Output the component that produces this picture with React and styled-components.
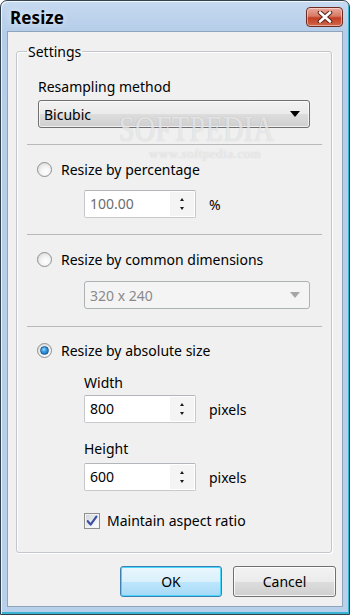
import React from 'react';
import styled, { createGlobalStyle } from 'styled-components';

const Global = createGlobalStyle`
  html, body { margin: 0; padding: 0; background: #ffffff; }
  body {
    width: 350px; height: 615px; overflow: hidden;
    font-family: "Noto Sans", "Open Sans", "DejaVu Sans", sans-serif;
    font-size: 14px;
    color: #000;
  }
  * { box-sizing: border-box; }
`;

const Window = styled.div`
  position: relative;
  width: 350px;
  height: 615px;
  display: flex;
  flex-direction: column;
  border: 1px solid #34414f;
  border-radius: 7px 7px 0 0;
  background: linear-gradient(180deg, #c6daf0 0px, #b6cde9 30px, #b9d0ea 100%);
  box-shadow: inset 1px 1px 0 rgba(255,255,255,0.75), inset -1px -2px 0 #3cb2d2;
  overflow: hidden;
`;

const TitleBar = styled.div`
  height: 30px;
  flex: none;
  display: flex;
  align-items: center;
  justify-content: space-between;
  padding: 2px 6px 0 9px;
`;

const Title = styled.div`
  font-weight: bold;
  font-size: 17px;
  letter-spacing: 0.1px;
  color: #000;
  text-shadow: 0 0 6px rgba(255,255,255,0.7);
`;

const CloseButton = styled.div`
  width: 37px;
  height: 20px;
  border: 1px solid #6e2a20;
  border-radius: 4px;
  background: linear-gradient(180deg, #e9a99c 0%, #d87a66 45%, #c23f24 55%, #d0674a 100%);
  box-shadow: inset 0 0 0 1px rgba(255,255,255,0.45);
  display: flex;
  align-items: center;
  justify-content: center;
`;

const Body = styled.div`
  flex: 1;
  margin: 0 6px 7px 6px;
  border: 1px solid #8fa4bd;
  background: #f0f0f0;
  display: flex;
  flex-direction: column;
`;

const GroupBox = styled.fieldset`
  margin: 10px 10px 0 8px;
  padding: 0 9px 0 10px;
  border: 1px solid #c3c7cb;
  border-radius: 3px;
  box-shadow: 1px 1px 0 #ffffff, inset 1px 1px 0 #ffffff;
  min-width: 0;
`;

const Legend = styled.legend`
  padding: 0 1px;
  line-height: 19px;
  font-size: 14px;
`;

const Section = styled.div`
  display: flex;
  flex-direction: column;
  align-items: flex-start;
  padding: ${p => p.$pt}px 0 ${p => p.$pb}px 11px;
  border-top: ${p => (p.$sep ? '1px solid #b9b9b9' : 'none')};
`;

const Label = styled.div`
  line-height: 19px;
  margin-top: ${p => p.$mt || 0}px;
  margin-left: ${p => p.$ml || 0}px;
  color: #000;
  white-space: nowrap;
`;

const Combo = styled.div`
  align-self: stretch;
  height: 28px;
  margin-top: ${p => p.$mt || 0}px;
  margin-left: ${p => p.$ml || 0}px;
  margin-right: 12px;
  padding: 0 9px 0 5px;
  display: flex;
  align-items: center;
  justify-content: space-between;
  border-radius: 3px;
  border: 1px solid ${p => (p.$disabled ? '#adb2b5' : '#707070')};
  background: ${p => (p.$disabled
    ? '#f4f4f4'
    : 'linear-gradient(180deg, #f2f2f2 0%, #ebebeb 50%, #dddddd 51%, #cfcfcf 100%)')};
  box-shadow: ${p => (p.$disabled ? 'none' : 'inset 0 0 0 1px rgba(255,255,255,0.7)')};
  color: ${p => (p.$disabled ? '#8a8a8a' : '#000')};
  line-height: 19px;
`;

const Arrow = styled.div`
  width: 0;
  height: 0;
  border-left: 5px solid transparent;
  border-right: 5px solid transparent;
  border-top: 6px solid ${p => (p.$disabled ? '#a6a6a6' : '#000')};
`;

const RadioRow = styled.div`
  display: flex;
  align-items: center;
  gap: 9px;
  height: 19px;
  margin-left: -1px;
  white-space: nowrap;
`;

const RadioCircle = styled.div`
  width: 15px;
  height: 15px;
  border-radius: 50%;
  border: 1px solid #8e8f8f;
  background: radial-gradient(circle at 60% 65%, #ffffff 0%, #f4f4f4 40%, #d2d2d2 100%);
  display: flex;
  align-items: center;
  justify-content: center;
  flex: none;
`;

const RadioDot = styled.div`
  width: 9px;
  height: 9px;
  border-radius: 50%;
  border: 1px solid #1f5c95;
  background: radial-gradient(circle at 40% 35%, #a9ddff 0%, #3b9ee6 35%, #0e5fab 100%);
`;

const FieldRow = styled.div`
  display: flex;
  align-items: center;
  margin-top: ${p => p.$mt || 0}px;
  margin-left: ${p => p.$ml || 0}px;
  gap: 13px;
`;

const Spin = styled.div`
  width: 112px;
  height: 28px;
  display: flex;
  border: 1px solid #c7c9cc;
  border-top-color: #b2b5b9;
  border-radius: 2px;
  background: #ffffff;
`;

const SpinText = styled.div`
  flex: 1;
  padding-left: 5px;
  line-height: 26px;
  color: ${p => (p.$disabled ? '#6d6d6d' : '#000')};
`;

const SpinButtons = styled.div`
  width: 24px;
  margin: 1px 1px 1px 0;
  background: #f4f4f4;
  display: flex;
  flex-direction: column;
  align-items: center;
  justify-content: center;
  gap: 6px;
`;

const Tri = styled.div`
  width: 0;
  height: 0;
  border-left: 2.5px solid transparent;
  border-right: 2.5px solid transparent;
  ${p => (p.$up ? 'border-bottom: 3px solid #1a1a1a;' : 'border-top: 3px solid #1a1a1a;')}
`;

const Unit = styled.div`
  line-height: 19px;
  color: #000;
`;

const CheckRow = styled.div`
  display: flex;
  align-items: center;
  gap: 7px;
  height: 19px;
  margin-top: ${p => p.$mt || 0}px;
  margin-left: 46px;
  white-space: nowrap;
`;

const CheckBox = styled.div`
  width: 16px;
  height: 16px;
  border: 1px solid #8e8f8f;
  background: linear-gradient(135deg, #cfd3d8 0%, #eef0f2 60%, #ffffff 100%);
  box-shadow: inset 0 0 0 1px #f3f3f3;
  display: flex;
  align-items: center;
  justify-content: center;
  flex: none;
`;

const ButtonRow = styled.div`
  margin-top: auto;
  display: flex;
  justify-content: flex-end;
  gap: 11px;
  padding: 0 6px 9px 0;
`;

const Button = styled.div`
  width: ${p => p.$w}px;
  height: 31px;
  display: flex;
  align-items: center;
  justify-content: center;
  border-radius: 3px;
  border: 1px solid ${p => (p.$default ? '#3c7fb1' : '#707070')};
  background: ${p => (p.$default
    ? 'linear-gradient(180deg, #eaf6fd 0%, #d9f0fc 50%, #bee6fd 51%, #a7d9f5 100%)'
    : 'linear-gradient(180deg, #f2f2f2 0%, #ebebeb 50%, #dddddd 51%, #cfcfcf 100%)')};
  box-shadow: inset 0 0 0 1px ${p => (p.$default ? '#48d8fb' : 'rgba(255,255,255,0.8)')};
  color: #000;
`;

const Watermark = styled.div`
  position: absolute;
  left: ${p => p.$x}px;
  top: ${p => p.$y}px;
  font-family: "Liberation Serif", "DejaVu Serif", serif;
  font-size: ${p => p.$size}px;
  line-height: 1;
  letter-spacing: ${p => p.$ls}px;
  transform: scaleY(${p => p.$sy || 1});
  transform-origin: top left;
  color: rgba(255, 255, 255, 0.6);
  text-shadow: 0 0 1px rgba(140, 140, 140, 0.45);
  pointer-events: none;
  white-space: nowrap;
`;

function SpinBox({ value, disabled }) {
  return (
    <Spin>
      <SpinText $disabled={disabled}>{value}</SpinText>
      <SpinButtons>
        <Tri $up />
        <Tri />
      </SpinButtons>
    </Spin>
  );
}

function Radio({ checked, children }) {
  return (
    <RadioRow>
      <RadioCircle>{checked && <RadioDot />}</RadioCircle>
      <span>{children}</span>
    </RadioRow>
  );
}

export default function App() {
  return (
    <>
      <Global />
      <Window>
        <TitleBar>
          <Title>Resize</Title>
          <CloseButton>
            <svg width="16" height="12" viewBox="0 0 16 12">
              <path d="M3 1.5 L13 10.5 M13 1.5 L3 10.5" stroke="#5a2318" strokeWidth="4.6" strokeLinecap="round" />
              <path d="M3 1.5 L13 10.5 M13 1.5 L3 10.5" stroke="#ffffff" strokeWidth="2.6" strokeLinecap="round" />
            </svg>
          </CloseButton>
        </TitleBar>
        <Body>
          <GroupBox>
            <Legend>Settings</Legend>
            <Section $pt={16} $pb={16}>
              <Label>Resampling method</Label>
              <Combo $mt={4}>
                <span>Bicubic</span>
                <Arrow />
              </Combo>
            </Section>
            <Section $sep $pt={15} $pb={16}>
              <Radio>Resize by percentage</Radio>
              <FieldRow $mt={11} $ml={46}>
                <SpinBox value="100.00" disabled />
                <Unit>%</Unit>
              </FieldRow>
            </Section>
            <Section $sep $pt={15} $pb={17}>
              <Radio>Resize by common dimensions</Radio>
              <Combo $mt={12} $ml={46} $disabled>
                <span>320 x 240</span>
                <Arrow $disabled />
              </Combo>
            </Section>
            <Section $sep $pt={14} $pb={22}>
              <Radio checked>Resize by absolute size</Radio>
              <Label $mt={13} $ml={46}>Width</Label>
              <FieldRow $mt={3} $ml={46}>
                <SpinBox value="800" />
                <Unit>pixels</Unit>
              </FieldRow>
              <Label $mt={16} $ml={46}>Height</Label>
              <FieldRow $mt={5} $ml={46}>
                <SpinBox value="600" />
                <Unit>pixels</Unit>
              </FieldRow>
              <CheckRow $mt={20}>
                <CheckBox>
                  <svg width="12" height="12" viewBox="0 0 12 12">
                    <path d="M1.8 6.2 L4.6 9.6 L10.4 1.6" fill="none" stroke="#3d4fa3" strokeWidth="2.2" strokeLinejoin="round" strokeLinecap="round" />
                  </svg>
                </CheckBox>
                <span>Maintain aspect ratio</span>
              </CheckRow>
            </Section>
          </GroupBox>
          <ButtonRow>
            <Button $w={102} $default>OK</Button>
            <Button $w={103}>Cancel</Button>
          </ButtonRow>
        </Body>
        <Watermark $x={118} $y={111} $size={28} $ls={0.5} $sy={1.25}>SOFTPEDIA</Watermark>
        <Watermark $x={148} $y={146} $size={13} $ls={0.5}>www.softpedia.com</Watermark>
      </Window>
    </>
  );
}
